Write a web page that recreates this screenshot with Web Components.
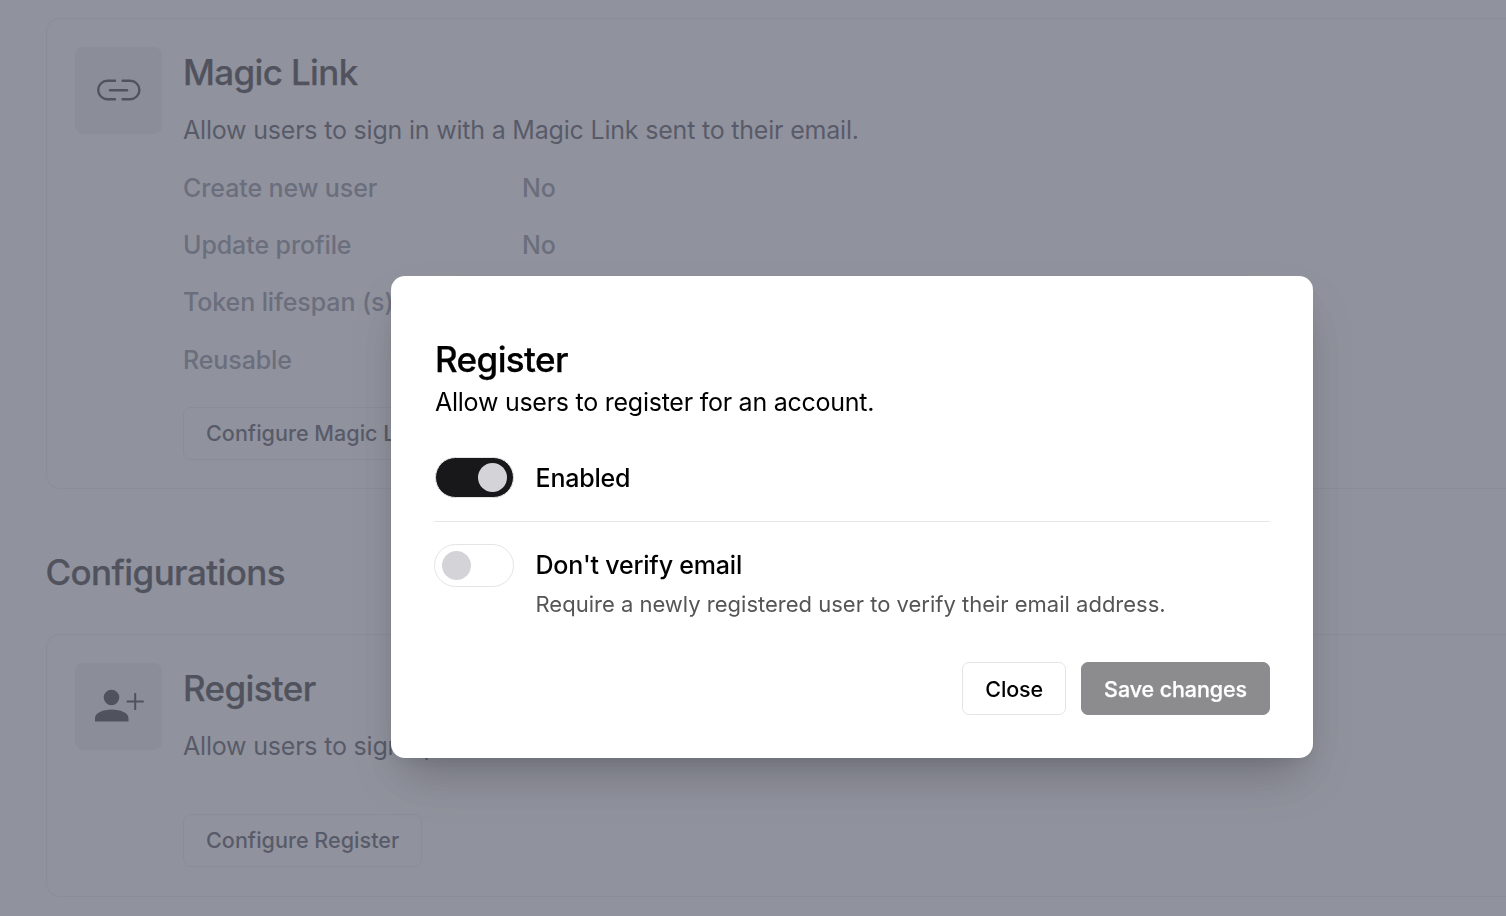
<!DOCTYPE html>
<html lang="en">
<head>
<meta charset="utf-8">
<title>Auth providers</title>
<style>
  html, body { margin: 0; height: 100%; background: #fff; overflow: hidden; }
  body { font-family: Inter, "Liberation Sans", sans-serif; }
</style>
</head>
<body>
<settings-page>
  <provider-card heading="Magic Link" text="Allow users to sign in with a Magic Link sent to their email." action="Configure Magic Link">
    <svg slot="icon" width="50" height="30" viewBox="0 0.8 50 30" fill="none" stroke="currentColor" stroke-width="2.4" stroke-linecap="round">
      <path d="M21 5.6H13.4a9 9 0 0 0 0 18.4H21"/>
      <path d="M28.6 5.6h7.6a9 9 0 0 1 0 18.4h-7.6"/>
      <path d="M16 15h17"/>
    </svg>
    <detail-row label="Create new user" value="No"></detail-row>
    <detail-row label="Update profile" value="No"></detail-row>
    <detail-row label="Token lifespan (s)"></detail-row>
    <detail-row label="Reusable"></detail-row>
  </provider-card>
  <section-title>Configurations</section-title>
  <provider-card heading="Register" text="Allow users to sign up." action="Configure Register" empty>
    <svg slot="icon" width="50" height="50" viewBox="0 0 50 50" fill="currentColor">
      <circle cx="17.500" cy="16.500" r="7.800"/>
      <path d="M1 40.500v-3.500c0-5 8-8.500 16.750-8.500s16.750 3.500 16.750 8.500v3.500z"/>
      <path d="M41.200 12v17M32.700 20.500h17" fill="none" stroke="currentColor" stroke-width="2"/>
    </svg>
  </provider-card>
</settings-page>

<modal-overlay>
  <h2 slot="title">Register</h2>
  <span slot="subtitle">Allow users to register for an account.</span>
  <toggle-row label="Enabled" on></toggle-row>
  <toggle-row label="Don't verify email" hint="Require a newly registered user to verify their email address."></toggle-row>
  <ui-button slot="actions">Close</ui-button>
  <ui-button slot="actions" primary>Save changes</ui-button>
</modal-overlay>

<script>
class SettingsPage extends HTMLElement {
  constructor() {
    super();
    this.attachShadow({ mode: 'open' }).innerHTML = `
      <style>
        :host { display: block; width: 1600px; padding: 18px 0 0 46px; color: #000; }
      </style>
      <slot></slot>`;
  }
}

class SectionTitle extends HTMLElement {
  constructor() {
    super();
    this.attachShadow({ mode: 'open' }).innerHTML = `
      <style>
        :host { display: block; margin: 60px 0 39px -0.5px; font-size: 35px; line-height: 46px; font-weight: 500; letter-spacing: -0.6px; -webkit-text-stroke: 0.25px; }
      </style>
      <slot></slot>`;
  }
}

class ProviderCard extends HTMLElement {
  constructor() {
    super();
    this.attachShadow({ mode: 'open' }).innerHTML = `
      <style>
        :host { display: flex; gap: 21px; padding: 28px; border: 1px solid #e5e7eb; border-radius: 14px; }
        :host([empty]) { padding-bottom: 29px; }
        .icon { flex: none; width: 87px; height: 87px; border-radius: 8px; background: #eceef0; color: #000;
          display: flex; align-items: center; justify-content: center; }
        .icon ::slotted(svg) { display: block; }
        h3 { margin: 0; font-size: 35px; line-height: 50px; font-weight: 500; letter-spacing: -0.65px; -webkit-text-stroke: 0.25px; }
        p { margin: 15px 0 0; font-size: 25px; line-height: 36px; letter-spacing: -0.2px; color: #1f2430; }
        .rows { margin-top: 11px; min-height: 21px; }
        button { display: block; margin-top: 18px; height: 53px; padding: 0 22px; border: 1px solid #e5e7eb; border-radius: 8px;
          background: none; color: #1f2430; font: 500 21.6px Inter, "Liberation Sans", sans-serif; }
      </style>
      <div class="icon"><slot name="icon"></slot></div>
      <div>
        <h3></h3>
        <p></p>
        <div class="rows"><slot></slot></div>
        <button type="button"></button>
      </div>`;
  }
  connectedCallback() {
    const root = this.shadowRoot;
    root.querySelector('h3').textContent = this.getAttribute('heading');
    root.querySelector('p').textContent = this.getAttribute('text');
    root.querySelector('button').textContent = this.getAttribute('action');
  }
}

class DetailRow extends HTMLElement {
  constructor() {
    super();
    this.attachShadow({ mode: 'open' }).innerHTML = `
      <style>
        :host { display: grid; grid-template-columns: 339px auto; height: 57.4px; align-items: center;
          font-size: 25px; font-weight: 500; letter-spacing: -0.1px; color: #6b7280; }
      </style>
      <span class="label"></span><span class="value"></span>`;
  }
  connectedCallback() {
    this.shadowRoot.querySelector('.label').textContent = this.getAttribute('label');
    this.shadowRoot.querySelector('.value').textContent = this.getAttribute('value') || '';
  }
}

class ModalOverlay extends HTMLElement {
  constructor() {
    super();
    this.attachShadow({ mode: 'open' }).innerHTML = `
      <style>
        :host { position: fixed; inset: 0; background: rgba(107, 110, 124, 0.75); display: block; }
        .panel { position: absolute; left: 391px; top: 276px; width: 922px; height: 482px; box-sizing: border-box;
          padding: 60px 43px 43px 44px; display: flex; flex-direction: column; background: #fff; border-radius: 14px;
          box-shadow: 0 25px 50px -12px rgba(0, 0, 0, 0.25), 0 8px 16px -6px rgba(0, 0, 0, 0.08); color: #000; }
        ::slotted(h2) { margin: 0; font-size: 35px; line-height: 46px; font-weight: 500; letter-spacing: -0.6px; -webkit-text-stroke: 0.25px; }
        .sub { font-size: 25px; line-height: 40px; letter-spacing: -0.25px; }
        .list { margin-top: 35px; }
        .actions { margin-top: auto; display: flex; justify-content: flex-end; gap: 15px; }
      </style>
      <div class="panel" role="dialog">
        <slot name="title"></slot>
        <div class="sub"><slot name="subtitle"></slot></div>
        <div class="list"><slot></slot></div>
        <div class="actions"><slot name="actions"></slot></div>
      </div>`;
  }
}

class ToggleRow extends HTMLElement {
  constructor() {
    super();
    this.attachShadow({ mode: 'open' }).innerHTML = `
      <style>
        :host { display: grid; grid-template-columns: 80px 1fr; column-gap: 21.5px; margin-left: -1px; padding-bottom: 22px; margin-bottom: 22px; border-bottom: 1px solid #e5e7eb; }
        :host(:last-of-type) { border-bottom: 0; margin-bottom: 0; padding-bottom: 0; }
        .track { width: 80px; height: 43px; box-sizing: border-box; border: 1px solid #e4e4e7; border-radius: 22px;
          background: #fff; display: flex; align-items: center; padding: 0 7px; }
        :host([on]) .track { background: #18181b; justify-content: flex-end; width: 78.500px; height: 41px; margin-left: 1px; padding: 0 6px; }
        .knob { width: 29px; height: 29px; border-radius: 50%; background: #d4d4d8; }
        .name { font-size: 25px; line-height: 42px; font-weight: 500; letter-spacing: -0.2px; }
        .hint { font-size: 22px; line-height: 36px; color: #555; }
        .hint:empty { display: none; }
      </style>
      <div class="track"><div class="knob"></div></div>
      <div><div class="name"></div><div class="hint"></div></div>`;
  }
  connectedCallback() {
    this.shadowRoot.querySelector('.name').textContent = this.getAttribute('label');
    this.shadowRoot.querySelector('.hint').textContent = this.getAttribute('hint') || '';
  }
}

class UiButton extends HTMLElement {
  constructor() {
    super();
    this.attachShadow({ mode: 'open' }).innerHTML = `
      <style>
        :host { display: flex; align-items: center; height: 53px; box-sizing: border-box; padding: 0 22px;
          border: 1px solid #e4e4e7; border-radius: 7px; font-size: 21.5px; font-weight: 500; letter-spacing: -0.1px; color: #000; background: #fff; }
        :host([primary]) { background: #8c8c8e; border-color: #8c8c8e; color: #fff; -webkit-text-stroke: 0.25px; }
      </style>
      <slot></slot>`;
  }
}

customElements.define('settings-page', SettingsPage);
customElements.define('section-title', SectionTitle);
customElements.define('provider-card', ProviderCard);
customElements.define('detail-row', DetailRow);
customElements.define('modal-overlay', ModalOverlay);
customElements.define('toggle-row', ToggleRow);
customElements.define('ui-button', UiButton);
</script>
</body>
</html>
